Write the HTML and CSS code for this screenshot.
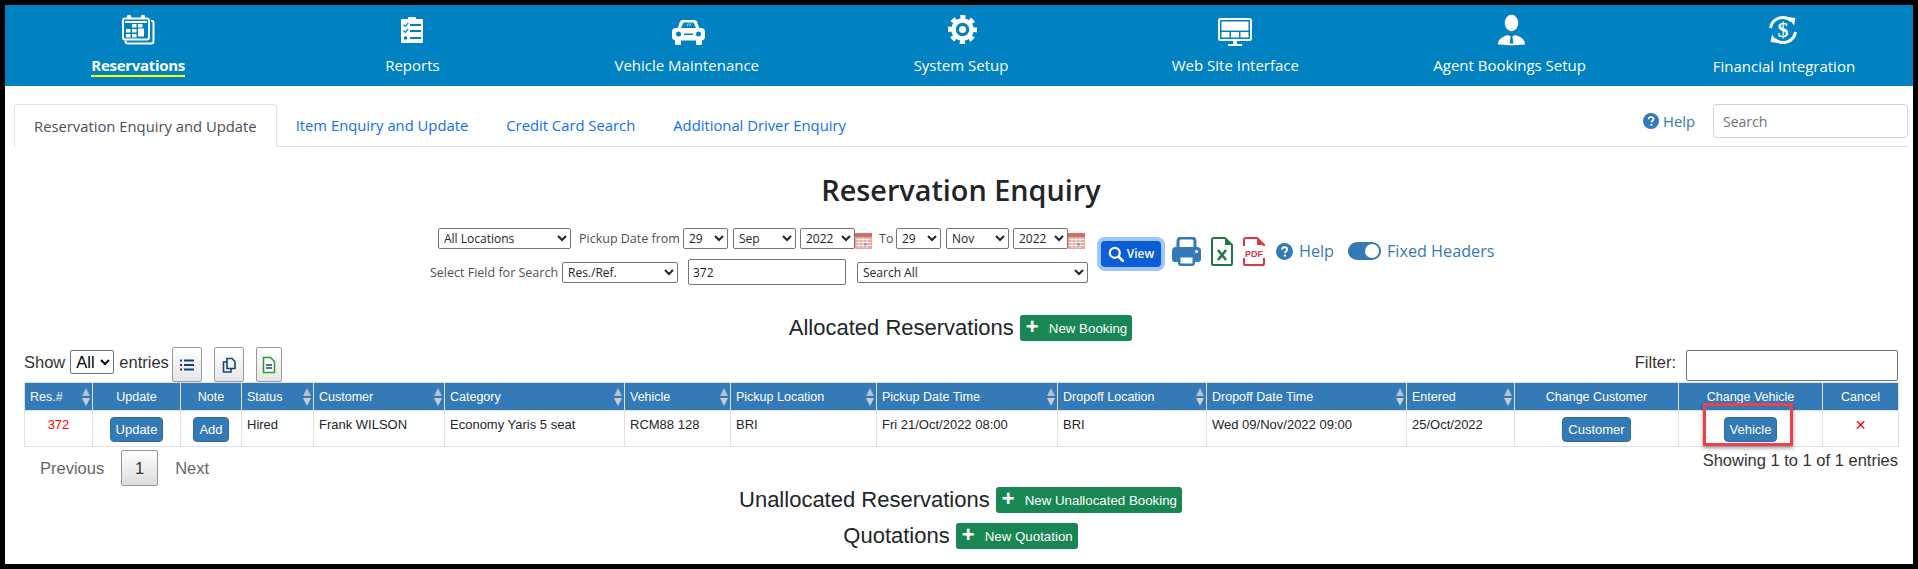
FILE: index.html
```html
<!DOCTYPE html>
<html lang="en">
<head>
<meta charset="utf-8">
<title>Reservation Enquiry</title>
<link rel="stylesheet" href="styles.css">
</head>
<body>
<div class="frame">
  <nav class="topnav">
    <a class="nav-item active">
      <svg class="nav-ico" viewBox="0 0 36 32"><path d="M31 7h1a1.500 1.500 0 0 1 1.500 1.500V27a2.500 2.500 0 0 1-2.500 2.500H8A2.500 2.500 0 0 1 5.500 27v-.5" fill="none" stroke="#fff" stroke-width="2"/><rect x="3" y="4.500" width="26" height="21" rx="2" fill="none" stroke="#fff" stroke-width="2"/><circle cx="9" cy="3" r="2.200" fill="#fff"/><circle cx="23" cy="3" r="2.200" fill="#fff"/><path d="M5 7h22v2H5z" fill="#fff"/><g fill="#fff"><rect x="12" y="10" width="4.500" height="3.500"/><rect x="18" y="10" width="4.500" height="3.500"/><rect x="6" y="15" width="4.500" height="3.500"/><rect x="12" y="15" width="4.500" height="3.500"/><rect x="18" y="14.500" width="6" height="8"/><rect x="6" y="20" width="4.500" height="3.500"/><rect x="12" y="20" width="4.500" height="3.500"/></g></svg>
      <span class="nav-label">Reservations</span>
    </a>
    <a class="nav-item">
      <svg class="nav-ico" viewBox="0 0 36 32"><rect x="7" y="5" width="22" height="24" rx="1" fill="#fff"/><rect x="14" y="3" width="8" height="3.500" rx="1" fill="#fff"/><g fill="none" stroke="#0081c2"><path d="M9.500 10.500l1.800 1.800 3-3.500M9.500 16.500l1.800 1.800 3-3.500" stroke-width="1.200"/><path d="M16 11h11M16 17h11M16 24h11" stroke-width="1.800"/></g><circle cx="11.500" cy="24" r="1.800" fill="#0081c2"/></svg>
      <span class="nav-label">Reports</span>
    </a>
    <a class="nav-item">
      <svg class="nav-ico" viewBox="0 0 36 32"><path d="M8 16l3-8.500Q11.800 6 13.500 6h12q1.700 0 2.500 1.500l3 8.500z" fill="#fff"/><path d="M12 14l2.500-5.500h10L27 14z" fill="#0081c2"/><path d="M18 12l1.500-2.500M20.500 12l1.500-2.500" stroke="#fff" stroke-width=".8"/><rect x="3" y="14" width="33" height="12.500" rx="4" fill="#fff"/><rect x="6" y="25" width="6" height="6" rx="1" fill="#fff"/><rect x="27" y="25" width="6" height="6" rx="1" fill="#fff"/><circle cx="9.500" cy="20" r="2.500" fill="#0081c2"/><circle cx="29.500" cy="20" r="2.500" fill="#0081c2"/><rect x="15" y="19.500" width="9" height="1.500" fill="#0081c2"/></svg>
      <span class="nav-label">Vehicle Maintenance</span>
    </a>
    <a class="nav-item">
      <svg class="nav-ico" viewBox="0 0 36 32"><g fill="none" stroke="#fff"><circle cx="19.500" cy="15.500" r="9" stroke-width="4.500"/><circle cx="19.500" cy="15.500" r="12.500" stroke-width="4" stroke-dasharray="5.200 4.617" stroke-dashoffset="2.600"/></g><circle cx="19.500" cy="15.500" r="3.500" fill="#fff"/></svg>
      <span class="nav-label">System Setup</span>
    </a>
    <a class="nav-item">
      <svg class="nav-ico" viewBox="0 0 36 32"><rect x="2" y="5" width="32" height="21" rx="1.500" fill="none" stroke="#fff" stroke-width="2"/><g fill="#fff"><rect x="4.500" y="7.500" width="27" height="9"/><rect x="4.500" y="18" width="8" height="5.500"/><rect x="14" y="18" width="8" height="5.500"/><rect x="23.500" y="18" width="8" height="5.500"/><rect x="16" y="27" width="4" height="3"/><rect x="11" y="30" width="14" height="2"/></g></svg>
      <span class="nav-label">Web Site Interface</span>
    </a>
    <a class="nav-item">
      <svg class="nav-ico" viewBox="0 0 36 32"><ellipse cx="19.500" cy="9" rx="6.800" ry="8.200" fill="#fff"/><path d="M6 30c0-5 5-7.500 10-9l3.500 2 3.500-2c5 1.500 10 4 10 9 0 .6-6 1.200-13.500 1.200S6 30.600 6 30z" fill="#fff"/><path d="M18.600 22.500h1.800l1 7h-3.800z" fill="#0081c2"/></svg>
      <span class="nav-label">Agent Bookings Setup</span>
    </a>
    <a class="nav-item low">
      <svg class="nav-ico" viewBox="0 0 36 32"><g fill="none" stroke="#fff" stroke-width="3"><path d="M4.500 14A12.500 12.500 0 0 1 25.500 7"/><path d="M29.500 18A12.500 12.500 0 0 1 8.500 25"/></g><path d="M22 3l7.500 1-1.500 7.500zM12 29l-7.500-1 1.500-7.500z" fill="#fff"/><text x="17" y="23" class="dollar">$</text></svg>
      <span class="nav-label">Financial Integration</span>
    </a>
  </nav>

  <main class="main">
    <div class="tabs">
      <a class="tab current">Reservation Enquiry and Update</a>
      <a class="tab">Item Enquiry and Update</a>
      <a class="tab">Credit Card Search</a>
      <a class="tab">Additional Driver Enquiry</a>
      <div class="tab-tools">
        <svg class="q-ico small" viewBox="0 0 16 16"><circle cx="8" cy="8" r="8" fill="#337ab7"/><path d="M5.600 6.200C5.700 4.700 6.800 4 8.100 4c1.400 0 2.400.8 2.400 2 0 1.800-2 1.700-2 3.300" fill="none" stroke="#fff" stroke-width="1.700"/><circle cx="8.400" cy="11.800" r="1.100" fill="#fff"/></svg>
        <span class="tab-help">Help</span>
        <input class="search" type="text" placeholder="Search">
      </div>
    </div>

    <h1 class="title">Reservation Enquiry</h1>

    <form class="filters">
      <div class="filter-block">
        <div class="frow first">
          <select class="w133"><option>All Locations</option></select>
          <span class="flabel from">Pickup Date from</span>
          <select class="w45 ml4"><option>29</option></select>
          <select class="w63 ml5"><option>Sep</option></select>
          <select class="w55 ml4"><option>2022</option></select>
          <svg class="cal" viewBox="0 0 17 16"><rect width="17" height="16" fill="#e8a7a0"/><rect y="0" width="17" height="4" fill="#cf6f66"/><path d="M1 6.500h15M1 9.500h15M1 12.500h15M4 5v10M8 5v10M12 5v10" stroke="#fff" stroke-width=".9"/><rect x="9" y="10" width="3" height="2.500" fill="#7f9fdc"/></svg>
          <span class="flabel to">To</span>
          <select class="w45 ml4"><option>29</option></select>
          <select class="w63 ml5"><option>Nov</option></select>
          <select class="w55 ml4"><option>2022</option></select>
          <svg class="cal" viewBox="0 0 17 16"><rect width="17" height="16" fill="#e8a7a0"/><rect y="0" width="17" height="4" fill="#cf6f66"/><path d="M1 6.500h15M1 9.500h15M1 12.500h15M4 5v10M8 5v10M12 5v10" stroke="#fff" stroke-width=".9"/><rect x="9" y="10" width="3" height="2.500" fill="#7f9fdc"/></svg>
        </div>
        <div class="frow second">
          <span class="flabel field">Select Field for Search</span>
          <select class="w116 ml4"><option>Res./Ref.</option></select>
          <input class="value" type="text" value="372">
          <select class="w231"><option>Search All</option></select>
        </div>
      </div>
      <div class="tools">
        <button class="view-btn" type="button">
          <svg viewBox="0 0 16 16" class="view-ico"><circle cx="6.800" cy="6.800" r="5" fill="none" stroke="#fff" stroke-width="2.200"/><path d="M10.500 10.500L15 15" stroke="#fff" stroke-width="2.600" stroke-linecap="round"/></svg>View
        </button>
        <svg class="t-print" viewBox="0 0 29 29"><path d="M6 11V4a3 3 0 0 1 3-3h11a3 3 0 0 1 3 3v7" fill="none" stroke="#337ab7" stroke-width="3"/><path d="M4 10h21a4 4 0 0 1 4 4v8a3 3 0 0 1-3 3h-3v-6H6v6H3a3 3 0 0 1-3-3v-8a4 4 0 0 1 4-4z" fill="#337ab7"/><path d="M6 19h17v7a3 3 0 0 1-3 3H9a3 3 0 0 1-3-3z" fill="#337ab7"/><rect x="8.500" y="20.500" width="12" height="6" fill="#fff"/><circle cx="24.500" cy="14.500" r="1.500" fill="#fff"/></svg>
        <svg class="t-file" viewBox="0 0 22 29"><path d="M1 27V3a2 2 0 0 1 2-2h11l7 7v19a1 1 0 0 1-1 1H2a1 1 0 0 1-1-1z" fill="#fff" stroke="#1d7a45" stroke-width="2"/><path d="M14 1v7h7z" fill="#1d7a45"/><path d="M7 13l8 10M15 13l-8 10" stroke="#1d7a45" stroke-width="2.600"/></svg>
        <svg class="t-file" viewBox="0 0 22 29"><path d="M1 9V3a2 2 0 0 1 2-2h11l7 7v1M1 21v6a1 1 0 0 0 1 1h18a1 1 0 0 0 1-1v-6" fill="none" stroke="#dc3545" stroke-width="2"/><path d="M14 1v7h7z" fill="#dc3545"/><text x="11" y="20" class="pdf">PDF</text></svg>
        <svg class="q-ico" viewBox="0 0 16 16"><circle cx="8" cy="8" r="8" fill="#337ab7"/><path d="M5.600 6.200C5.700 4.700 6.800 4 8.100 4c1.400 0 2.400.8 2.400 2 0 1.800-2 1.700-2 3.300" fill="none" stroke="#fff" stroke-width="1.700"/><circle cx="8.400" cy="11.800" r="1.100" fill="#fff"/></svg>
        <span class="tool-text help">Help</span>
        <span class="toggle"><span class="knob"></span></span>
        <span class="tool-text">Fixed Headers</span>
      </div>
    </form>

    <div class="section first-section">
      <h2 class="sec-title">Allocated Reservations</h2>
      <a class="add-btn"><span class="plus">+</span>New Booking</a>
    </div>

    <div class="dt-top">
      <div class="dt-left">
        <span>Show</span>
        <select class="dt-len"><option>All</option></select>
        <span>entries</span>
        <button class="dt-btn first-btn" type="button"><svg viewBox="0 0 16 16" class="dt-ico"><path d="M5 3.500h10M5 8h10M5 12.500h10" stroke="#14437a" stroke-width="2"/><path d="M1 3.500h2M1 8h2M1 12.500h2" stroke="#14437a" stroke-width="2"/></svg></button>
        <button class="dt-btn" type="button"><svg viewBox="0 0 16 18" class="dt-ico"><path d="M6 2.500h5l3 3v7H6z" fill="none" stroke="#14437a" stroke-width="1.600"/><path d="M6 6H2.500v10H10v-3.500" fill="none" stroke="#14437a" stroke-width="1.600"/></svg></button>
        <button class="dt-btn narrow" type="button"><svg viewBox="0 0 14 18" class="dt-ico"><path d="M1.500 1.500h7l4 4v11h-11z" fill="#fff" stroke="#2c9a2c" stroke-width="1.500"/><path d="M4 9h6M4 12h6" stroke="#14437a" stroke-width="1.300"/></svg></button>
      </div>
      <div class="dt-right">
        <label class="filter-label">Filter:</label>
        <input class="filter-input" type="text">
      </div>
    </div>

    <table class="grid">
      <thead>
        <tr>
          <th class="sortable">Res.#</th>
          <th class="center">Update</th>
          <th class="center">Note</th>
          <th class="sortable">Status</th>
          <th class="sortable">Customer</th>
          <th class="sortable">Category</th>
          <th class="sortable">Vehicle</th>
          <th class="sortable">Pickup Location</th>
          <th class="sortable">Pickup Date Time</th>
          <th class="sortable">Dropoff Location</th>
          <th class="sortable">Dropoff Date Time</th>
          <th class="sortable">Entered</th>
          <th class="center">Change Customer</th>
          <th class="center">Change Vehicle</th>
          <th class="center">Cancel</th>
        </tr>
      </thead>
      <tbody>
        <tr>
          <td class="center red">372</td>
          <td class="center btn-cell"><a class="row-btn">Update</a></td>
          <td class="center btn-cell"><a class="row-btn">Add</a></td>
          <td>Hired</td>
          <td>Frank WILSON</td>
          <td>Economy Yaris 5 seat</td>
          <td>RCM88 128</td>
          <td>BRI</td>
          <td>Fri 21/Oct/2022 08:00</td>
          <td>BRI</td>
          <td>Wed 09/Nov/2022 09:00</td>
          <td>25/Oct/2022</td>
          <td class="center btn-cell"><a class="row-btn">Customer</a></td>
          <td class="center btn-cell marked"><a class="row-btn">Vehicle</a><span class="callout"></span></td>
          <td class="center red cross">✕</td>
        </tr>
      </tbody>
    </table>

    <div class="dt-bottom">
      <div class="pager">
        <a class="page-link prev">Previous</a>
        <a class="page-num">1</a>
        <a class="page-link">Next</a>
      </div>
      <div class="info">Showing 1 to 1 of 1 entries</div>
    </div>

    <div class="section">
      <h2 class="sec-title">Unallocated Reservations</h2>
      <a class="add-btn"><span class="plus">+</span>New Unallocated Booking</a>
    </div>
    <div class="section last-section">
      <h2 class="sec-title">Quotations</h2>
      <a class="add-btn"><span class="plus">+</span>New Quotation</a>
    </div>
  </main>
</div>
</body>
</html>
```

FILE: styles.css
```css
* { box-sizing: border-box; }
html, body { margin: 0; padding: 0; height: 100%; }
body { background: #000; overflow: hidden; font-family: "Open Sans", "Liberation Sans", sans-serif; color: #212529; }
.frame { margin: 5px; height: 559px; background: #fff; overflow: hidden; }

/* top navigation */
.topnav { display: grid; grid-template-columns: repeat(7, 274.300px); height: 81px; margin-left: -4px; width: 1920px; background: #0081c2; }
.nav-item { display: flex; flex-direction: column; align-items: center; padding-top: 9px; color: #fff; font-size: 15px; }
.nav-ico { width: 36px; height: 32px; overflow: visible; display: block; flex: none; }
.nav-label { display: block; margin-top: 9px; line-height: 20px; white-space: nowrap; border-bottom: 2px solid transparent; }
.nav-item.low .nav-label { margin-top: 10px; }
.nav-item.active .nav-label { font-weight: 700; border-bottom-color: #ffff00; letter-spacing: -.3px; }
.dollar { font: 700 22px "Liberation Serif", serif; fill: #fff; text-anchor: middle; }

/* tabs */
.main { display: block; }
.tabs { display: flex; align-items: stretch; height: 43px; margin: 18px 5px 0 9px; border-bottom: 1px solid #dee2e6; font-size: 14.800px; }
.tab { display: flex; align-items: center; padding: 0 19px; color: #0d6efd; white-space: nowrap; height: 42px; }
.tab.current { color: #495057; background: #fff; border: 1px solid #dee2e6; border-bottom: 0; border-radius: 4px 4px 0 0; height: 43px; }
.tab-tools { margin-left: auto; display: flex; align-items: center; height: 34px; }
.q-ico { width: 17px; height: 17px; flex: none; margin-left: 11px; }
.q-ico.small { width: 16px; height: 16px; margin-left: 0; }
.tab-help { color: #337ab7; margin-left: 4px; width: 33px; }
.search { width: 195px; height: 34px; margin-left: 17px; padding: 0 9px; border: 1px solid #ced4da; border-radius: 4px; font: 14px "Open Sans", sans-serif; }
.search::placeholder { color: #6c757d; opacity: 1; }

.title { margin: 23px 0 0; padding: 0 0 1px 4px; text-align: center; font-size: 28.800px; line-height: 39px; font-weight: 600; color: #212529; }

/* filter form */
.filters { display: flex; align-items: flex-start; margin-top: 18px; padding-left: 425px; font-size: 12.500px; }
.filter-block { width: 658px; flex: none; }
.frow { display: flex; align-items: center; }
.frow.first { height: 21px; margin-left: 8px; }
.frow.second { height: 26px; margin-top: 10px; }
.frow select, .dt-len { height: 21px; padding: 0 0 0 1px; background: #fff; color: #212529; border: 1px solid #767676; border-radius: 2px; font: 12px "Open Sans", sans-serif; }
.flabel { color: #495057; white-space: nowrap; }
.from { margin-left: 8px; width: 100px; }
.to { margin-left: 7px; width: 13px; }
.field { width: 128px; }
.w133 { width: 133px; }
.w45 { width: 45px; }
.w63 { width: 63px; }
.w55 { width: 55px; }
.w116 { width: 116px; }
.w231 { width: 231px; margin-left: 11px; }
.ml4 { margin-left: 4px; }
.ml5 { margin-left: 5px; }
.cal { width: 17px; height: 16px; align-self: flex-end; flex: none; }
.value { width: 158px; height: 26px; margin-left: 10px; padding: 0 4px; border: 1px solid #767676; border-radius: 2px; font: 12px "Open Sans", sans-serif; color: #212529; }

.tools { display: flex; align-items: center; height: 32px; margin: 7px 0 0 13px; flex: none; }
.view-btn { display: flex; align-items: center; justify-content: center; gap: 3px; width: 60px; height: 26px; margin-top: 5px; padding: 0; border: 0; border-radius: 4px; background: #0b5ed7; box-shadow: 0 0 0 4px #9ec5fe; color: #fff; font: 600 12px "Open Sans", sans-serif; }
.view-ico { width: 16px; height: 16px; }
.t-print { width: 29px; height: 29px; margin-left: 11px; flex: none; }
.t-file { width: 22px; height: 29px; margin-left: 10px; flex: none; }
.pdf { font: 700 9px "Liberation Sans", sans-serif; fill: #dc3545; text-anchor: middle; }
.tool-text { font-size: 16.200px; color: #337ab7; white-space: nowrap; }
.tool-text.help { margin-left: 6px; width: 35px; }
.toggle { display: block; width: 33px; height: 18px; margin: 0 6px 0 14px; padding: 2px 2px 2px 17px; border-radius: 9px; background: #337ab7; }
.knob { display: block; width: 14px; height: 14px; border-radius: 50%; background: #fff; }

/* section headings */
.section { display: flex; justify-content: center; align-items: center; height: 26px; padding-left: 3px; }
.first-section { margin-top: 30px; padding-left: 3px; }
.last-section { margin-top: 10px; }
.sec-title { margin: 0 6px 0 0; font: 400 22px "Liberation Sans", sans-serif; color: #212529; }
.add-btn { display: flex; align-items: center; height: 26px; padding: 0 5px 0 6px; border-radius: 3px; background: #198754; color: #fff; font: 13.300px "Liberation Sans", sans-serif; white-space: nowrap; }
.plus { width: 23px; font-size: 22px; font-weight: 700; line-height: 26px; margin-top: -2px; }

/* datatable top */
.dt-top { display: flex; justify-content: space-between; height: 35px; margin-top: 6px; padding: 0 15px 0 19px; font: 16.500px "Liberation Sans", sans-serif; color: #333; }
.dt-left { display: flex; align-items: flex-start; }
.dt-left > span { line-height: 30px; }
.dt-len { width: 44px; height: 24px; margin: 3px 5px; font: 16.500px "Liberation Sans", sans-serif; color: #000; }
.dt-btn { display: flex; align-items: center; justify-content: center; width: 30px; height: 35px; margin-left: 12px; padding: 0; border: 1px solid #999; border-radius: 2px; background: linear-gradient(#fff, #e6e6e6); }
.first-btn { margin-left: 3px; }
.narrow { width: 26px; }
.dt-ico { width: 16px; height: 18px; }
.dt-right { display: flex; align-items: flex-start; }
.filter-label { line-height: 30px; margin-right: 10px; }
.filter-input { width: 212px; height: 31px; margin-top: 3px; border: 1px solid #767676; border-radius: 2px; background: #fff; }

/* table */
.grid { width: 1874px; margin-left: 19px; border-collapse: collapse; table-layout: fixed; font: 13px/18px "Liberation Sans", sans-serif; color: #212529; }
.grid th, .grid td { border: 1px solid #dee2e6; padding: 0 5px; overflow: hidden; white-space: nowrap; }
.grid th { position: relative; height: 28px; background: #337ab7; color: #fff; font-size: 12.500px; font-weight: 400; text-align: left; }
.grid td { height: 36px; padding-top: 5px; padding-bottom: 0; vertical-align: top; }
.grid th.center, .grid td.center { text-align: center; }
.grid th:nth-child(1) { width: 68px; }
.grid th:nth-child(2) { width: 88px; }
.grid th:nth-child(3) { width: 61px; }
.grid th:nth-child(4) { width: 72px; }
.grid th:nth-child(5) { width: 131px; }
.grid th:nth-child(6) { width: 180px; }
.grid th:nth-child(7) { width: 106px; }
.grid th:nth-child(8) { width: 146px; }
.grid th:nth-child(9) { width: 181px; }
.grid th:nth-child(10) { width: 149px; }
.grid th:nth-child(11) { width: 200px; }
.grid th:nth-child(12) { width: 108px; }
.grid th:nth-child(13) { width: 164px; }
.grid th:nth-child(14) { width: 144px; }
.grid th:nth-child(15) { width: 76px; }
.sortable::before, .sortable::after { content: ""; position: absolute; right: 2px; border-left: 4.500px solid transparent; border-right: 4.500px solid transparent; }
.sortable::before { top: 5px; border-bottom: 8px solid #b4c0cc; }
.sortable::after { top: 15px; border-top: 8px solid #c8ced4; }
.red { color: #ff0000; }
.grid td.cross { font: 14px/18px "DejaVu Sans", sans-serif; color: #ff0000; }
.grid td.btn-cell { padding-top: 6px; overflow: visible; }
.row-btn { display: inline-block; height: 25px; padding: 0 5px; border: 1px solid #2e6da4; border-radius: 4px; background: #337ab7; color: #fff; line-height: 23px; }
.marked { position: relative; }
.grid td.marked { overflow: visible; }
.callout { position: absolute; left: 24px; top: -8px; width: 90px; height: 43px; border: 3px solid #f0404c; box-shadow: 0 2px 4px rgba(0,0,0,.4); }

/* bottom */
.dt-bottom { display: flex; justify-content: space-between; height: 37px; margin-top: 3px; padding: 0 15px 0 19px; font: 16.500px "Liberation Sans", sans-serif; }
.pager { display: flex; align-items: center; height: 36px; color: #666; }
.page-link { padding: 0 17px 0 17px; }
.page-link.prev { padding-left: 16px; }
.page-num { display: flex; align-items: center; justify-content: center; width: 37px; height: 36px; border: 1px solid #979797; border-radius: 2px; background: linear-gradient(#fff, #dcdcdc); color: #333; }
.info { color: #333; line-height: 20px; }
```
